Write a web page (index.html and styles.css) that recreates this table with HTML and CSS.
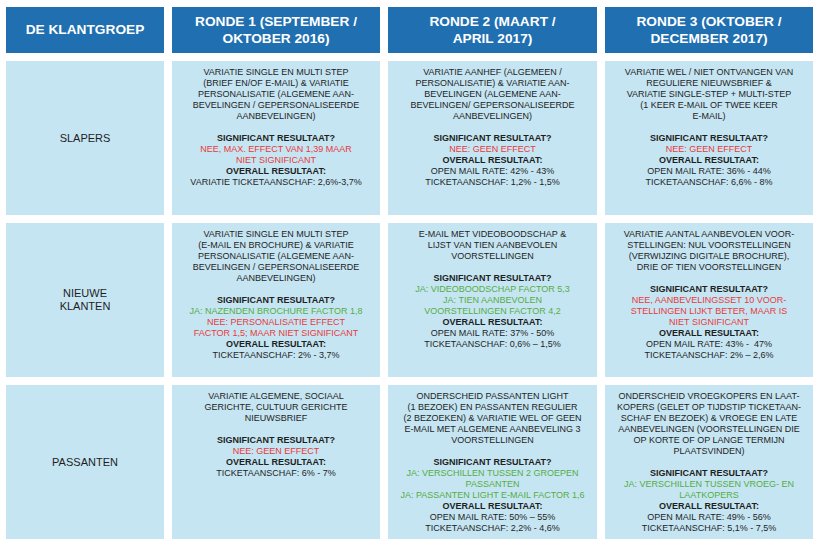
FILE: index.html
```html
<!DOCTYPE html>
<html lang="nl">
<head>
<meta charset="utf-8">
<title>Klantgroepen</title>
<link rel="stylesheet" href="styles.css">
</head>
<body>
<div class="grid">
  <div class="head">DE KLANTGROEP</div>
  <div class="head">RONDE 1 (SEPTEMBER /<br>OKTOBER 2016)</div>
  <div class="head">RONDE 2 (MAART /<br>APRIL 2017)</div>
  <div class="head">RONDE 3 (OKTOBER /<br>DECEMBER 2017)</div>

  <div class="label">SLAPERS</div>
  <div class="cell">
    <p>VARIATIE SINGLE EN MULTI STEP<br>(BRIEF EN/OF E-MAIL) &amp; VARIATIE<br>PERSONALISATIE (ALGEMENE AAN-<br>BEVELINGEN / GEPERSONALISEERDE<br>AANBEVELINGEN)</p>
    <p class="b">SIGNIFICANT RESULTAAT?</p>
    <p class="red">NEE, MAX. EFFECT VAN 1,39 MAAR<br>NIET SIGNIFICANT</p>
    <p class="b">OVERALL RESULTAAT:</p>
    <p>VARIATIE TICKETAANSCHAF: 2,6%-3,7%</p>
  </div>
  <div class="cell">
    <p>VARIATIE AANHEF (ALGEMEEN /<br>PERSONALISATIE) &amp; VARIATIE AAN-<br>BEVELINGEN (ALGEMENE AAN-<br>BEVELINGEN/ GEPERSONALISEERDE<br>AANBEVELINGEN)</p>
    <p class="b">SIGNIFICANT RESULTAAT?</p>
    <p class="red">NEE: GEEN EFFECT</p>
    <p class="b">OVERALL RESULTAAT:</p>
    <p>OPEN MAIL RATE: 42% - 43%<br>TICKETAANSCHAF: 1,2% - 1,5%</p>
  </div>
  <div class="cell">
    <p>VARIATIE WEL / NIET ONTVANGEN VAN<br>REGULIERE NIEUWSBRIEF &amp;<br>VARIATIE SINGLE-STEP + MULTI-STEP<br>(1 KEER E-MAIL OF TWEE KEER<br>E-MAIL)</p>
    <p class="b">SIGNIFICANT RESULTAAT?</p>
    <p class="red">NEE: GEEN EFFECT</p>
    <p class="b">OVERALL RESULTAAT:</p>
    <p>OPEN MAIL RATE: 36% - 44%<br>TICKETAANSCHAF: 6,6% - 8%</p>
  </div>

  <div class="label">NIEUWE<br>KLANTEN</div>
  <div class="cell">
    <p>VARIATIE SINGLE EN MULTI STEP<br>(E-MAIL EN BROCHURE) &amp; VARIATIE<br>PERSONALISATIE (ALGEMENE AAN-<br>BEVELINGEN / GEPERSONALISEERDE<br>AANBEVELINGEN)</p>
    <p class="b">SIGNIFICANT RESULTAAT?</p>
    <p class="green">JA: NAZENDEN BROCHURE FACTOR 1,8</p>
    <p class="red">NEE: PERSONALISATIE EFFECT<br>FACTOR 1,5; MAAR NIET SIGNIFICANT</p>
    <p class="b">OVERALL RESULTAAT:</p>
    <p>TICKETAANSCHAF: 2% - 3,7%</p>
  </div>
  <div class="cell">
    <p>E-MAIL MET VIDEOBOODSCHAP &amp;<br>LIJST VAN TIEN AANBEVOLEN<br>VOORSTELLINGEN</p>
    <p class="b">SIGNIFICANT RESULTAAT?</p>
    <p class="green">JA: VIDEOBOODSCHAP FACTOR 5,3<br>JA: TIEN AANBEVOLEN<br>VOORSTELLINGEN FACTOR 4,2</p>
    <p class="b">OVERALL RESULTAAT:</p>
    <p>OPEN MAIL RATE: 37% - 50%<br>TICKETAANSCHAF: 0,6% – 1,5%</p>
  </div>
  <div class="cell">
    <p>VARIATIE AANTAL AANBEVOLEN VOOR-<br>STELLINGEN: NUL VOORSTELLINGEN<br>(VERWIJZING DIGITALE BROCHURE),<br>DRIE OF TIEN VOORSTELLINGEN</p>
    <p class="b">SIGNIFICANT RESULTAAT?</p>
    <p class="red">NEE, AANBEVELINGSSET 10 VOOR-<br>STELLINGEN LIJKT BETER, MAAR IS<br>NIET SIGNIFICANT</p>
    <p class="b">OVERALL RESULTAAT:</p>
    <p>OPEN MAIL RATE: 43% -&nbsp; 47%<br>TICKETAANSCHAF: 2% – 2,6%</p>
  </div>

  <div class="label">PASSANTEN</div>
  <div class="cell">
    <p>VARIATIE ALGEMENE, SOCIAAL<br>GERICHTE, CULTUUR GERICHTE<br>NIEUWSBRIEF</p>
    <p class="b">SIGNIFICANT RESULTAAT?</p>
    <p class="red">NEE: GEEN EFFECT</p>
    <p class="b">OVERALL RESULTAAT:</p>
    <p>TICKETAANSCHAF: 6% - 7%</p>
  </div>
  <div class="cell">
    <p>ONDERSCHEID PASSANTEN LIGHT<br>(1 BEZOEK) EN PASSANTEN REGULIER<br>(2 BEZOEKEN) &amp; VARIATIE WEL OF GEEN<br>E-MAIL MET ALGEMENE AANBEVELING 3<br>VOORSTELLINGEN</p>
    <p class="b">SIGNIFICANT RESULTAAT?</p>
    <p class="green">JA: VERSCHILLEN TUSSEN 2 GROEPEN<br>PASSANTEN<br>JA: PASSANTEN LIGHT E-MAIL FACTOR 1,6</p>
    <p class="b">OVERALL RESULTAAT:</p>
    <p>OPEN MAIL RATE: 50% – 55%<br>TICKETAANSCHAF: 2,2% - 4,6%</p>
  </div>
  <div class="cell">
    <p>ONDERSCHEID VROEGKOPERS EN LAAT-<br>KOPERS (GELET OP TIJDSTIP TICKETAAN-<br>SCHAF EN BEZOEK) &amp; VROEGE EN LATE<br>AANBEVELINGEN (VOORSTELLINGEN DIE<br>OP KORTE OF OP LANGE TERMIJN<br>PLAATSVINDEN)</p>
    <p class="b">SIGNIFICANT RESULTAAT?</p>
    <p class="green">JA: VERSCHILLEN TUSSEN VROEG- EN<br>LAATKOPERS</p>
    <p class="b">OVERALL RESULTAAT:</p>
    <p>OPEN MAIL RATE: 49% - 56%<br>TICKETAANSCHAF: 5,1% - 7,5%</p>
  </div>
</div>
</body>
</html>
```

FILE: styles.css
```css
html, body {
  margin: 0;
  padding: 0;
  background: #ffffff;
}
body {
  font-family: "Liberation Sans", Arial, sans-serif;
  padding: 7px 7px 0 6px;
}
.grid {
  display: grid;
  grid-template-columns: 158px 208px 209px 208px;
  grid-template-rows: 46px 154px 154px 154px;
  gap: 8px;
}
.head {
  background: #1f6fb1;
  color: #ffffff;
  font-weight: bold;
  font-size: 13.7px;
  line-height: 16.5px;
  display: flex;
  align-items: center;
  justify-content: center;
  text-align: center;
  padding-top: 1px;
}
.label {
  background: #c6e5f2;
  color: #1e1e1e;
  font-size: 11px;
  line-height: 13px;
  display: flex;
  align-items: center;
  justify-content: center;
  text-align: center;
}
.cell {
  background: #c6e5f2;
  color: #1e1e1e;
  font-size: 9px;
  line-height: 11px;
  text-align: center;
  padding: 6px 4px 0;
}
.cell p {
  margin: 0;
}
.cell p:first-child {
  margin-bottom: 11px;
}
.b {
  font-weight: bold;
}
.red {
  color: #e83a3b;
}
.green {
  color: #55ad45;
}
```
